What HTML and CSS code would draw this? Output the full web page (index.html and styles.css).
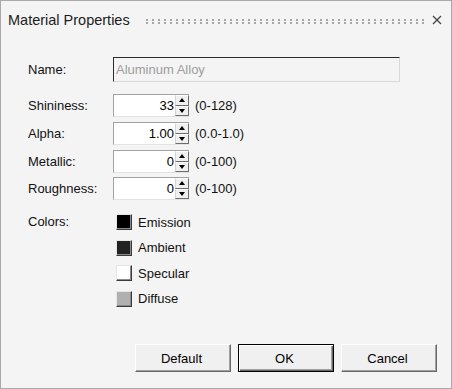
FILE: index.html
```html
<html>

<head>
	<link rel="stylesheet" href="styles.css">
</head>

<body>
	<div class="dialog">
		<!-- title bar with drag grip and close button -->
		<div class="titlebar">
			<span class="title">Material Properties</span>
			<div class="grip">
				<div class="grip-row"></div>
				<div class="grip-row"></div>
			</div>
			<div class="close">
				<svg width="10" height="10" viewBox="0 0 10 10">
					<path d="M1 1 L9 9 M9 1 L1 9" stroke="#404040" stroke-width="1.2" fill="none" />
				</svg>
			</div>
		</div>

		<div class="form">
			<div class="row name-row">
				<span class="label">Name:</span>
				<div class="name-field">Aluminum Alloy</div>
			</div>

			<div class="row spin-row">
				<span class="label">Shininess:</span>
				<div class="spin">
					<div class="spin-field">33</div>
					<div class="spin-btns">
						<div class="spin-btn"><span class="arrow-up"></span></div>
						<div class="spin-btn"><span class="arrow-down"></span></div>
					</div>
				</div>
				<span class="range">(0-128)</span>
			</div>
			<div class="row spin-row">
				<span class="label">Alpha:</span>
				<div class="spin">
					<div class="spin-field">1.00</div>
					<div class="spin-btns">
						<div class="spin-btn"><span class="arrow-up"></span></div>
						<div class="spin-btn"><span class="arrow-down"></span></div>
					</div>
				</div>
				<span class="range">(0.0-1.0)</span>
			</div>
			<div class="row spin-row">
				<span class="label">Metallic:</span>
				<div class="spin">
					<div class="spin-field">0</div>
					<div class="spin-btns">
						<div class="spin-btn"><span class="arrow-up"></span></div>
						<div class="spin-btn"><span class="arrow-down"></span></div>
					</div>
				</div>
				<span class="range">(0-100)</span>
			</div>
			<div class="row spin-row last">
				<span class="label">Roughness:</span>
				<div class="spin">
					<div class="spin-field">0</div>
					<div class="spin-btns">
						<div class="spin-btn"><span class="arrow-up"></span></div>
						<div class="spin-btn"><span class="arrow-down"></span></div>
					</div>
				</div>
				<span class="range">(0-100)</span>
			</div>

			<div class="colors">
				<span class="label colors-label">Colors:</span>
				<div class="swatch-list">
					<div class="swatch-row"><span class="swatch emission"></span>Emission</div>
					<div class="swatch-row"><span class="swatch ambient"></span>Ambient</div>
					<div class="swatch-row"><span class="swatch specular"></span>Specular</div>
					<div class="swatch-row"><span class="swatch diffuse"></span>Diffuse</div>
				</div>
			</div>
		</div>

		<div class="footer">
			<div class="btn">Default</div>
			<div class="btn btn-default">OK</div>
			<div class="btn">Cancel</div>
		</div>
	</div>
</body>

</html>
```

FILE: styles.css
```css
body {
	margin: 0;
}

.dialog {
	width: 452px;
	height: 389px;
	box-sizing: border-box;
	border: 1px solid #a9a9a9;
	background: #f4f4f4;
	display: flex;
	flex-direction: column;
	font-family: "Liberation Sans", Arial, sans-serif;
	font-size: 13px;
	color: #111;
}

/* title bar */
.titlebar {
	height: 38px;
	display: flex;
	align-items: center;
	padding: 0 9px 0 7px;
}

.title {
	font-size: 14.5px;
	color: #1c1c1c;
}

/* two rows of small dots used as a drag handle */
.grip {
	flex: 1;
	display: flex;
	flex-direction: column;
	gap: 1px;
	margin: 2px 8px 0 16px;
}

.grip-row {
	height: 2px;
	background: repeating-linear-gradient(90deg, #a6a6a6 0 2px, transparent 2px 6px);
}

.close {
	width: 10px;
	height: 10px;
	display: flex;
}

/* form area */
.form {
	padding: 18px 0 0 27px;
}

.row {
	display: flex;
	align-items: center;
}

.label {
	width: 85px;
}

.name-row {
	height: 25px;
}

.name-field {
	width: 287px;
	height: 25px;
	box-sizing: border-box;
	border: 1px solid;
	border-color: #2b2b2b #d9d9d9 #d9d9d9 #2b2b2b;
	color: #9d9d9d;
	line-height: 23px;
	padding-left: 2px;
}

.spin-row {
	height: 23px;
	margin-top: 5px;
}

.name-row + .spin-row {
	margin-top: 12px;
}

.spin-row.last {
	margin-top: 4px;
}

.spin {
	width: 76px;
	height: 23px;
	display: flex;
}

.spin-field {
	flex: 1;
	background: #fff;
	border-top: 1px solid #a2a2a2;
	border-left: 1px solid #a2a2a2;
	border-bottom: 1px solid #e2e2e2;
	text-align: right;
	line-height: 21px;
	padding-right: 1px;
	color: #000;
}

.spin-btns {
	width: 14px;
	display: flex;
	flex-direction: column;
	background: #fff;
	border-top: 1px solid #a2a2a2;
	border-bottom: 1px solid #e2e2e2;
}

.spin-btn {
	flex: 1;
	display: flex;
	align-items: center;
	justify-content: center;
	background: #f0f0f0;
	border: 1px solid;
	border-color: #fff #6d6d6d #6d6d6d #d4d4d4;
}

.arrow-up {
	border-left: 3px solid transparent;
	border-right: 3px solid transparent;
	border-bottom: 4px solid #000;
}

.arrow-down {
	border-left: 3px solid transparent;
	border-right: 3px solid transparent;
	border-top: 4px solid #000;
}

.range {
	margin-left: 6px;
}

/* colour swatches */
.colors {
	display: flex;
	margin-top: 14px;
}

.colors-label {
	line-height: 16px;
}

.swatch-list {
	display: flex;
	flex-direction: column;
	gap: 9.67px;
	margin-left: 3px;
}

.swatch-row {
	display: flex;
	align-items: center;
	height: 16px;
}

.swatch {
	width: 16px;
	height: 16px;
	box-sizing: border-box;
	border: 1px solid;
	border-color: #e6e6e6 #3a3a3a #3a3a3a #e6e6e6;
	box-shadow: inset -1px -1px #8a8a8a;
	margin-right: 6px;
}

.emission {
	background: #000;
}

.ambient {
	background: #222;
}

.specular {
	background: #fff;
}

.diffuse {
	background: #b0b0b0;
}

/* dialog buttons */
.footer {
	margin-top: auto;
	display: flex;
	justify-content: flex-end;
	gap: 7px;
	padding: 0 14px 16px 0;
}

.btn {
	width: 96px;
	height: 28px;
	box-sizing: border-box;
	display: flex;
	align-items: center;
	justify-content: center;
	border: 1px solid;
	border-color: #fff #696969 #696969 #fff;
	box-shadow: inset -1px -1px #a0a0a0;
	background: #f0f0f0;
	padding-right: 3px;
	color: #000;
}

.btn-default {
	border: 1px solid #000;
	box-shadow: inset 1px 1px #fff, inset -1px -1px #696969, inset -2px -2px #a0a0a0;
}
```
